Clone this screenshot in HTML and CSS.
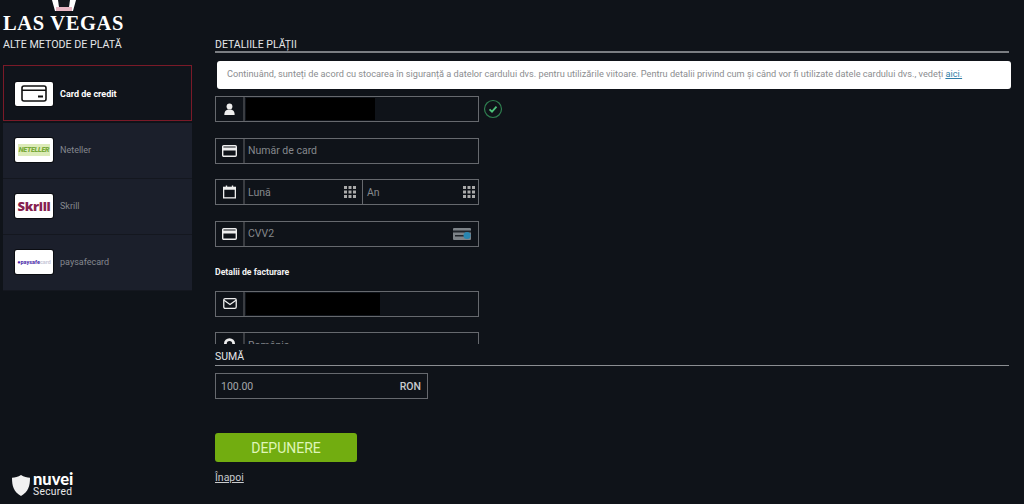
FILE: index.html
```html
<!DOCTYPE html>
<html lang="ro">
<head>
<meta charset="utf-8">
<title>Depunere</title>
<link rel="stylesheet" href="styles.css">
</head>
<body>
<div class="page">
  <aside class="side">
    <div class="logo">
      <svg class="crown" width="28" height="12" viewBox="0 0 28 12"><path d="M2 0l3 11h18l3-11" fill="#fff"/><path d="M8 0l1 7h10l1-7z" fill="#15181e"/><path d="M6 7h16v4H6z" fill="#e9b7c4"/></svg>
      <div class="brand">LAS VEGAS</div>
    </div>
    <div class="side-title">ALTE METODE DE PLATĂ</div>
    <ul class="methods">
      <li class="method active">
        <span class="thumb"><svg width="26" height="17" viewBox="0 0 26 17"><rect x="1" y="1" width="24" height="15" rx="2" fill="none" stroke="#111" stroke-width="1.600"/><path d="M1 4.500h24v1.500H1z" fill="#111"/><path d="M17 10.500h5v2h-5z" fill="#111"/></svg></span>
        <span class="mname">Card de credit</span>
      </li>
      <li class="method">
        <span class="thumb"><span class="neteller">NETELLER</span></span>
        <span class="mname">Neteller</span>
      </li>
      <li class="method">
        <span class="thumb"><span class="skrill">Skrill</span></span>
        <span class="mname">Skrill</span>
      </li>
      <li class="method">
        <span class="thumb"><span class="psc">●paysafe<i>card</i></span></span>
        <span class="mname">paysafecard</span>
      </li>
    </ul>
    <div class="nuvei">
      <svg width="18" height="21" viewBox="0 0 18 21"><path d="M9 0c3 1.800 6 2.500 9 2.800 0 8-1.500 14-9 18.200C1.500 16.800 0 10.800 0 2.800 3 2.500 6 1.800 9 0z" fill="#f1f1f1"/></svg>
      <div class="nuvei-text"><b>nuvei</b><span>Secured</span></div>
    </div>
  </aside>
  <main class="main">
    <h2 class="section-title">DETALIILE PLĂȚII</h2>
    <p class="notice">Continuând, sunteți de acord cu stocarea în siguranță a datelor cardului dvs. pentru utilizările viitoare. Pentru detalii privind cum și când vor fi utilizate datele cardului dvs., vedeți <a href="#">aici.</a></p>
    <div class="scroll">
      <div class="row">
        <div class="field">
          <span class="ico"><svg width="11" height="12" viewBox="0 0 12 14"><circle cx="6" cy="4" r="3.400" fill="#eee"/><path d="M0 14c0-5 2-6.500 6-6.500s6 1.500 6 6.500z" fill="#eee"/></svg></span>
          <span class="val"><span class="redact r1"></span></span>
        </div>
        <svg class="ok" width="20" height="20" viewBox="0 0 20 20"><circle cx="10" cy="10" r="8.500" fill="none" stroke="#2f7f50" stroke-width="1.200"/><path d="M6.500 10.300l2.500 2.400 4.500-5" fill="none" stroke="#4fc47c" stroke-width="1.800"/></svg>
      </div>
      <div class="row">
        <div class="field">
          <span class="ico"><svg width="15" height="12" viewBox="0 0 15 12"><rect x=".7" y=".7" width="13.600" height="10.600" rx="1" fill="none" stroke="#eee" stroke-width="1.400"/><path d="M1 2.500h13v3H1z" fill="#eee"/></svg></span>
          <span class="val">Număr de card</span>
        </div>
      </div>
      <div class="row">
        <div class="field">
          <span class="ico"><svg width="13" height="14" viewBox="0 0 14 14"><rect x=".7" y="2" width="12.600" height="11.300" fill="none" stroke="#eee" stroke-width="1.400"/><path d="M1 2h12v2.500H1zM3 0h1.500v3H3zM9.500 0H11v3H9.500z" fill="#eee"/></svg></span>
          <span class="val split">Lună
            <svg class="grid" width="12" height="12" viewBox="0 0 12 12"><path d="M0 0h3v3H0zM4.500 0h3v3h-3zM9 0h3v3H9zM0 4.500h3v3H0zM4.500 4.500h3v3h-3zM9 4.500h3v3H9zM0 9h3v3H0zM4.500 9h3v3h-3zM9 9h3v3H9z" fill="#aaa"/></svg>
          </span>
          <span class="val split second">An
            <svg class="grid" width="12" height="12" viewBox="0 0 12 12"><path d="M0 0h3v3H0zM4.500 0h3v3h-3zM9 0h3v3H9zM0 4.500h3v3H0zM4.500 4.500h3v3h-3zM9 4.500h3v3H9zM0 9h3v3H0zM4.500 9h3v3h-3zM9 9h3v3H9z" fill="#aaa"/></svg>
          </span>
        </div>
      </div>
      <div class="row">
        <div class="field">
          <span class="ico"><svg width="15" height="12" viewBox="0 0 15 12"><rect x=".7" y=".7" width="13.600" height="10.600" rx="1" fill="none" stroke="#eee" stroke-width="1.400"/><path d="M1 2.500h13v3H1z" fill="#eee"/></svg></span>
          <span class="val split">CVV2
            <svg width="18" height="12" viewBox="0 0 18 12"><rect width="18" height="12" rx="1" fill="#7d8388"/><path d="M0 2.500h18v2H0zM2 7h9v1.500H2z" fill="#20252a"/><circle cx="14" cy="7.500" r="3.500" fill="#2a86b0"/></svg>
          </span>
        </div>
      </div>
      <h3 class="sub">Detalii de facturare</h3>
      <div class="row">
        <div class="field">
          <span class="ico"><svg width="14" height="11" viewBox="0 0 15 12"><rect x=".7" y=".7" width="13.600" height="10.600" rx="1.500" fill="none" stroke="#eee" stroke-width="1.400"/><path d="M1 2.500l6.500 4.500L14 2.500" fill="none" stroke="#eee" stroke-width="1.400"/></svg></span>
          <span class="val"><span class="redact r2"></span></span>
        </div>
      </div>
      <div class="row">
        <div class="field">
          <span class="ico"><svg width="11" height="15" viewBox="0 0 12 16"><path d="M6 0a6 6 0 0 1 6 6c0 4-6 10-6 10S0 10 0 6a6 6 0 0 1 6-6z" fill="#eee"/><circle cx="6" cy="6" r="3" fill="#0f1319"/></svg></span>
          <span class="val">România</span>
        </div>
      </div>
    </div>
    <h2 class="section-title amount-title">SUMĂ</h2>
    <div class="field amount"><span>100.00</span><span class="cur">RON</span></div>
    <button class="submit" type="button">DEPUNERE</button>
    <a class="back" href="#">Înapoi</a>
  </main>
</div>
</body>
</html>
```
FILE: styles.css
```css
* { box-sizing: border-box; }
html, body { margin: 0; height: 504px; overflow: hidden; }
body { background: #0f1319; color: #fff; font-family: Roboto, "Liberation Sans", sans-serif; }
.page { display: flex; height: 504px; }
.side { width: 215px; flex: none; display: flex; flex-direction: column; padding-left: 3px; }
.logo { height: 31px; position: relative; }
.crown { position: absolute; left: 47px; top: 0; }
.brand { position: absolute; left: 0; top: 12px; font: bold 20.500px/22px "Liberation Serif", serif; letter-spacing: .65px; white-space: nowrap; }
.side-title { margin-top: 7px; font-size: 10.700px; line-height: 14px; color: #e4e6e8; }
.methods { list-style: none; margin: 13px 0 0; padding: 0; width: 189px; }
.method { height: 56px; display: flex; align-items: center; gap: 7px; padding: 0 0 2px 12px; background: #1b1f2b; font-size: 9px; color: #85888f; border-bottom: 1px solid #14171f; }
.method.active { background: #10141b; border: 1px solid #7a1a28; color: #fff; font-weight: 700; padding: 1px 0 0 11px; height: 56px; margin-bottom: 2px; }
.thumb { width: 38px; height: 24px; flex: none; background: #fff; border-radius: 2px; display: flex; align-items: center; justify-content: center; overflow: hidden; box-shadow: 0 0 0 1px #0b0d12; }
.neteller { font-size: 7px; font-weight: 900; font-style: italic; color: #79a93a; background: #dcebb8; padding: 2px 1px; letter-spacing: -.2px; }
.skrill { font-family: "Open Sans", sans-serif; font-size: 13px; font-weight: 800; color: #86214f; letter-spacing: -.3px; }
.psc { font-size: 5.500px; font-weight: 700; color: #4a27a8; white-space: nowrap; }
.psc i { font-style: normal; color: #c8c8d8; }
.nuvei { margin: auto 0 7px 9px; display: flex; align-items: center; gap: 3px; }
.nuvei-text { display: flex; flex-direction: column; }
.nuvei-text b { font-family: Lato, sans-serif; font-size: 16.500px; line-height: 13px; font-weight: 900; }
.nuvei-text span { font-size: 10.300px; line-height: 11px; color: #e8e8e8; letter-spacing: .3px; }
.main { width: 794px; }
.section-title { margin: 38px 0 0; height: 15px; font-size: 10.500px; line-height: 13px; font-weight: 400; color: #e4e6e8; border-bottom: 2px solid #7b7e82; }
.notice { margin: 8px 0 0 2px; width: 794px; height: 28px; background: #fff; border-radius: 3px; padding: 0 0 0 10px; font-size: 9.200px; line-height: 26px; color: #8b8d90; white-space: nowrap; }
.notice a { color: #2e7ea8; }
.scroll { height: 248px; margin-top: 7px; overflow: hidden; }
.row { display: flex; align-items: center; gap: 5px; margin-bottom: 15.500px; }
.field { width: 264px; height: 26px; flex: none; display: flex; border: 1px solid #66696e; }
.ico { width: 29px; flex: none; display: flex; align-items: center; justify-content: center; border-right: 2px solid #3a3d42; }
.val { flex: 1; display: flex; align-items: center; padding-left: 3px; font-size: 10.500px; color: #85888c; min-width: 0; }
.split { justify-content: space-between; padding-right: 7px; }
.second { border-left: 1px solid #66696e; padding-left: 4px; padding-right: 3px; margin-left: -1px; }
.redact { display: block; background: #000; height: 22px; }
.r1 { width: 129px; margin-left: -2px; }
.r2 { width: 134px; margin-left: -2px; }
.ok { margin-left: -1px; }
.sub { margin: 19px 0 0; height: 25px; font-size: 8.700px; line-height: 12px; font-weight: 700; color: #f2f2f2; }
.amount-title { margin-top: 5px; height: 17px; line-height: 16px; border-bottom: 1px solid #8b8e92; }
.amount { width: 213px; margin-top: 7px; align-items: center; justify-content: space-between; padding: 0 6px 0 5px; font-size: 10.500px; color: #a5a8ac; }
.cur { color: #c9cbce; font-weight: 500; }
.submit { display: block; margin-top: 34px; width: 142px; height: 29px; background: #72ad10; border: 0; border-radius: 3px; color: #dff5b8; font: 400 14px Roboto, sans-serif; }
.back { display: inline-block; margin-top: 9px; font-size: 10.500px; color: #c9cbce; }
```
